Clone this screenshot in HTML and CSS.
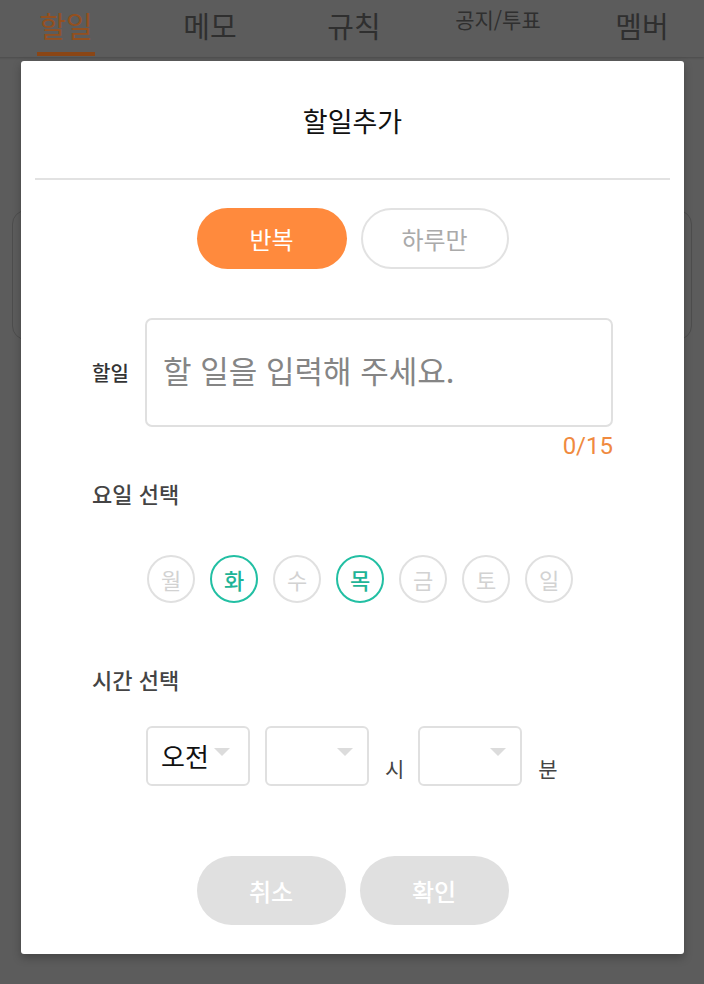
FILE: index.html
```html
<!DOCTYPE html>
<html lang="ko">
<head>
<meta charset="utf-8">
<title>할일추가</title>
<link rel="stylesheet" href="styles.css">
</head>
<body>
<header class="tabs">
  <div class="tab active"><span>할일</span></div>
  <div class="tab"><span>메모</span></div>
  <div class="tab"><span>규칙</span></div>
  <div class="tab small"><span>공지/투표</span></div>
  <div class="tab"><span>멤버</span></div>
</header>
<main class="page">
  <div class="bg-card"></div>
</main>

<div class="modal">
  <h1 class="modal-title">할일추가</h1>
  <hr class="divider">
  <div class="toggle-row">
    <button class="pill pill-on">반복</button>
    <button class="pill pill-off">하루만</button>
  </div>
  <div class="field-row">
    <label class="field-label">할일</label>
    <div class="text-input">할 일을 입력해 주세요.</div>
  </div>
  <div class="counter">0/15</div>
  <div class="section-label">요일 선택</div>
  <div class="days">
    <span class="day">월</span>
    <span class="day on">화</span>
    <span class="day">수</span>
    <span class="day on">목</span>
    <span class="day">금</span>
    <span class="day">토</span>
    <span class="day">일</span>
  </div>
  <div class="section-label time-label">시간 선택</div>
  <div class="time-row">
    <div class="select ampm"><span class="sel-text">오전</span><span class="caret"></span></div>
    <div class="select"><span class="caret"></span></div>
    <span class="unit">시</span>
    <div class="select"><span class="caret"></span></div>
    <span class="unit">분</span>
  </div>
  <div class="action-row">
    <button class="action">취소</button>
    <button class="action">확인</button>
  </div>
</div>
</body>
</html>
```

FILE: styles.css
```css
* { box-sizing: border-box; }
html, body { margin: 0; padding: 0; }
body {
  width: 704px;
  height: 984px;
  overflow: hidden;
  background: #5c5c5c;
  font-family: "Noto Sans CJK KR", "Noto Sans", sans-serif;
  position: relative;
}
.tabs {
  height: 57px;
  display: grid;
  grid-template-columns: repeat(5, 144px);
  margin-left: -6px;
  box-shadow: 0 1px 2px rgba(0,0,0,0.18);
  position: relative;
}
.tab {
  display: flex;
  justify-content: center;
  align-items: flex-start;
  padding-top: 4px;
  font-size: 29px;
  line-height: 42px;
  color: #2f2f2f;
  font-weight: 400;
}
.tab span { display: block; height: 52px; }
.tab.small { font-size: 21px; line-height: 32px; padding-top: 3px; }
.tab.active { color: #93501f; }
.tab.active span {
  border-bottom: 4px solid #8a4616;
  padding: 0 2px;
  height: 52px;
}
.page { padding: 153px 12px 0; }
.bg-card {
  height: 130px;
  border: 1px solid #4d4d4d;
  border-radius: 14px;
}
.modal {
  position: absolute;
  left: 21px;
  top: 61px;
  width: 663px;
  height: 893px;
  background: #fff;
  border-radius: 3px;
  box-shadow: 0 4px 8px rgba(0,0,0,0.25);
  padding: 0 14px;
}
.modal-title {
  margin: 0;
  height: 117px;
  display: flex;
  align-items: center;
  justify-content: center;
  padding-top: 2px;
  font-size: 27px;
  font-weight: 400;
  color: #111;
}
.divider {
  margin: 0;
  border: 0;
  height: 2px;
  background: #e2e2e2;
}
.toggle-row {
  display: flex;
  justify-content: center;
  gap: 14px;
  margin-top: 28px;
}
.pill {
  width: 150px;
  height: 61px;
  border-radius: 31px;
  font-family: inherit;
  font-size: 24px;
  font-weight: 400;
  padding: 0;
}
.pill-on { background: #ff8a3d; border: 0; color: #fff; }
.pill-off { width: 148px; background: #fff; border: 2px solid #e2e2e2; color: #aaa; }
.field-row {
  display: flex;
  align-items: center;
  margin: 49px 57px 0;
  gap: 13px;
}
.field-label {
  width: 40px;
  font-size: 20px;
  font-weight: 500;
  color: #333;
  white-space: nowrap;
}
.text-input {
  flex: 1;
  height: 109px;
  border: 2px solid #e0e0e0;
  border-radius: 7px;
  padding: 0 16px;
  display: flex;
  align-items: center;
  padding-bottom: 6px;
  font-size: 31px;
  color: #858585;
}
.counter {
  margin: 2px 57px 0;
  text-align: right;
  font-family: Roboto, "Noto Sans CJK KR", sans-serif;
  font-size: 24px;
  line-height: 34px;
  color: #f08a3f;
}
.section-label {
  margin: 15px 57px 0;
  font-size: 22px;
  line-height: 30px;
  font-weight: 500;
  color: #444;
}
.days {
  display: flex;
  gap: 15px;
  margin: 47px 0 0 112px;
}
.day {
  width: 48px;
  height: 48px;
  border-radius: 50%;
  border: 2px solid #e0e0e0;
  color: #d2d2d2;
  font-size: 22px;
  font-weight: 400;
  display: flex;
  align-items: center;
  justify-content: center;
}
.day.on { border-color: #22bfa3; color: #1fb497; font-weight: 500; }
.time-label { margin-top: 61px; }
.time-row {
  display: flex;
  align-items: flex-end;
  margin: 32px 0 0 111px;
}
.select {
  width: 104px;
  height: 60px;
  border: 2px solid #e0e0e0;
  border-radius: 6px;
  display: flex;
  align-items: center;
  justify-content: flex-end;
  padding: 0 14px 8px 13px;
  margin-right: 15px;
}
.select.ampm { justify-content: flex-start; padding-right: 0; }
.sel-text { font-size: 26px; color: #111; margin-right: 5px; padding-top: 6px; }
.caret {
  width: 0;
  height: 0;
  border-left: 8px solid transparent;
  border-right: 8px solid transparent;
  border-top: 8px solid #dcdcdc;
}
.unit {
  font-size: 21px;
  color: #444;
  line-height: 30px;
  padding-bottom: 3px;
  margin: 0 14px 0 1px;
}
.action-row {
  display: flex;
  justify-content: center;
  gap: 14px;
  margin-top: 70px;
}
.action {
  width: 149px;
  height: 69px;
  border-radius: 35px;
  border: 0;
  background: #e0e0e0;
  color: #fff;
  font-family: inherit;
  font-size: 24px;
  font-weight: 500;
  padding: 0;
}
```
